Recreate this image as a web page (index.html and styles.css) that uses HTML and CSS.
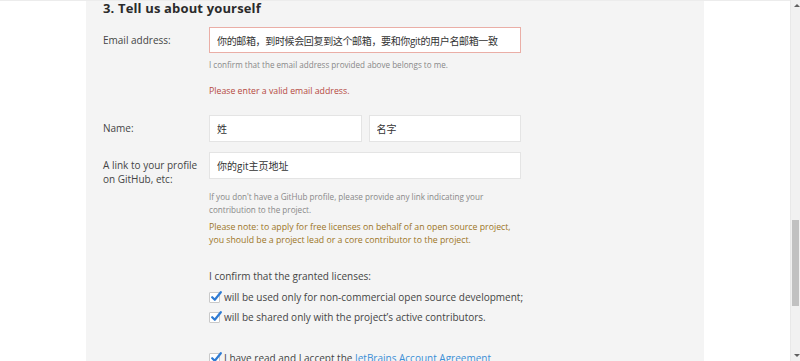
FILE: index.html
```html
<!DOCTYPE html>
<html lang="en">
<head>
    <meta charset="UTF-8">
    <title>Open Source License Request</title>
    <link rel="stylesheet" href="styles.css">
</head>
<body>
    <div class="page">
        <div class="form-panel">
            <h2>3. Tell us about yourself</h2>

            <div class="form-row">
                <label class="row-label">Email address:</label>
                <div class="row-field">
                    <input class="text-input error" type="text" value="你的邮箱，到时候会回复到这个邮箱，要和你git的用户名邮箱一致">
                    <p class="hint">I confirm that the email address provided above belongs to me.</p>
                    <p class="error-msg">Please enter a valid email address.</p>
                </div>
            </div>

            <div class="form-row name-row">
                <label class="row-label">Name:</label>
                <div class="row-field name-fields">
                    <input class="text-input" type="text" value="姓">
                    <input class="text-input" type="text" value="名字">
                </div>
            </div>

            <div class="form-row link-row">
                <label class="row-label">A link to your profile on GitHub, etc:</label>
                <div class="row-field">
                    <input class="text-input" type="text" value="你的git主页地址">
                    <p class="hint help">If you don't have a GitHub profile, please provide any link indicating your contribution to the project.</p>
                    <p class="note">Please note: to apply for free licenses on behalf of an open source project, you should be a project lead or a core contributor to the project.</p>
                </div>
            </div>

            <div class="confirm-block">
                <p class="confirm-title">I confirm that the granted licenses:</p>
                <label class="check-line">
                    <span class="check-box"><svg viewBox="0 0 12 12" width="12" height="12"><path d="M2.2 6.2 L4.8 8.8 L10.8 1.2" fill="none" stroke="#2f7bd3" stroke-width="2.2" stroke-linecap="round" stroke-linejoin="round"/></svg></span>
                    will be used only for non-commercial open source development;
                </label>
                <label class="check-line">
                    <span class="check-box"><svg viewBox="0 0 12 12" width="12" height="12"><path d="M2.2 6.2 L4.8 8.8 L10.8 1.2" fill="none" stroke="#2f7bd3" stroke-width="2.2" stroke-linecap="round" stroke-linejoin="round"/></svg></span>
                    will be shared only with the project’s active contributors.
                </label>
                <label class="check-line agree">
                    <span class="check-box"><svg viewBox="0 0 12 12" width="12" height="12"><path d="M2.2 6.2 L4.8 8.8 L10.8 1.2" fill="none" stroke="#2f7bd3" stroke-width="2.2" stroke-linecap="round" stroke-linejoin="round"/></svg></span>
                    <span>I have read and I accept the <a href="#">JetBrains Account Agreement</a></span>
                </label>
            </div>
        </div>
    </div>

    <div class="fake-scrollbar">
        <span class="arrow up"></span>
        <span class="thumb"></span>
        <span class="arrow down"></span>
    </div>
</body>
</html>
```

FILE: styles.css
```css
* {
    margin: 0;
    padding: 0;
    box-sizing: border-box;
}

html, body {
    height: 100%;
    overflow: hidden;
}

body {
    background: #ffffff;
    font-family: 'Open Sans', 'Noto Sans CJK SC', sans-serif;
    color: #444;
    border-top: 1px solid #ececec;
}

.page {
    display: flex;
    padding-left: 86px;
    height: 100%;
}

.form-panel {
    width: 618px;
    background: #f4f4f4;
    padding-left: 17px;
}

h2 {
    font-size: 13px;
    font-weight: 700;
    color: #2b2b2b;
    line-height: 18px;
    margin-top: -2px;
    margin-bottom: 10px;
    letter-spacing: 0.15px;
}

.form-row {
    display: grid;
    grid-template-columns: 106px 312px;
}

.row-label {
    font-size: 10px;
    line-height: 14px;
    padding-top: 6px;
    color: #444;
    padding-right: 8px;
}

.row-field {
    display: flex;
    flex-direction: column;
}

.text-input {
    width: 100%;
    height: 27px;
    border: 1px solid #e4e4e4;
    background: #fff;
    padding: 0 7px;
    font-family: 'Open Sans', 'Noto Sans CJK SC', sans-serif;
    font-size: 10px;
    color: #333;
    outline: none;
}

.text-input.error {
    height: 26px;
    border-color: #eaaea6;
    letter-spacing: -0.35px;
}

.hint {
    font-size: 8.1px;
    line-height: 14px;
    color: #888;
    margin-top: 5px;
}

.error-msg {
    font-size: 8.75px;
    line-height: 14px;
    color: #b4483e;
    margin-top: 12px;
}

.name-row {
    margin-top: 17px;
}

.name-fields {
    flex-direction: row;
    gap: 7px;
}

.link-row {
    margin-top: 10px;
}

.hint.help {
    font-size: 8.15px;
    line-height: 13px;
    margin-top: 11px;
}

.note {
    font-size: 8.75px;
    line-height: 13px;
    color: #9c7426;
    margin-top: 5px;
}

.confirm-block {
    margin-left: 106px;
    margin-top: 20px;
    font-size: 10px;
    color: #444;
}

.confirm-title {
    line-height: 18px;
}

.check-line {
    display: flex;
    align-items: center;
    gap: 4px;
    line-height: 20px;
}

.check-line:first-of-type {
    margin-top: 2px;
}

.check-line.agree {
    margin-top: 21px;
}

.check-box {
    width: 11px;
    height: 11px;
    border: 1px solid #c9c9c9;
    background: #fff;
    border-radius: 1px;
    position: relative;
    flex-shrink: 0;
}

.check-box svg {
    position: absolute;
    left: 0;
    top: -2px;
}

.check-line a {
    color: #3b8fd6;
    text-decoration: none;
}

/* scrollbar drawn over the page edge */
.fake-scrollbar {
    position: fixed;
    top: 0;
    right: 0;
    width: 10px;
    height: 100%;
    background: #f1f1f1;
    border-left: 1px solid #e8e8e8;
}

.thumb {
    position: absolute;
    left: 1px;
    right: 1px;
    top: 220px;
    height: 86px;
    background: #c1c1c1;
}

.arrow {
    position: absolute;
    left: 3px;
    width: 0;
    height: 0;
    border-left: 3px solid transparent;
    border-right: 3px solid transparent;
}

.arrow.up {
    top: 4px;
    border-bottom: 3px solid #606060;
}

.arrow.down {
    bottom: 4px;
    border-top: 3px solid #606060;
}
```
